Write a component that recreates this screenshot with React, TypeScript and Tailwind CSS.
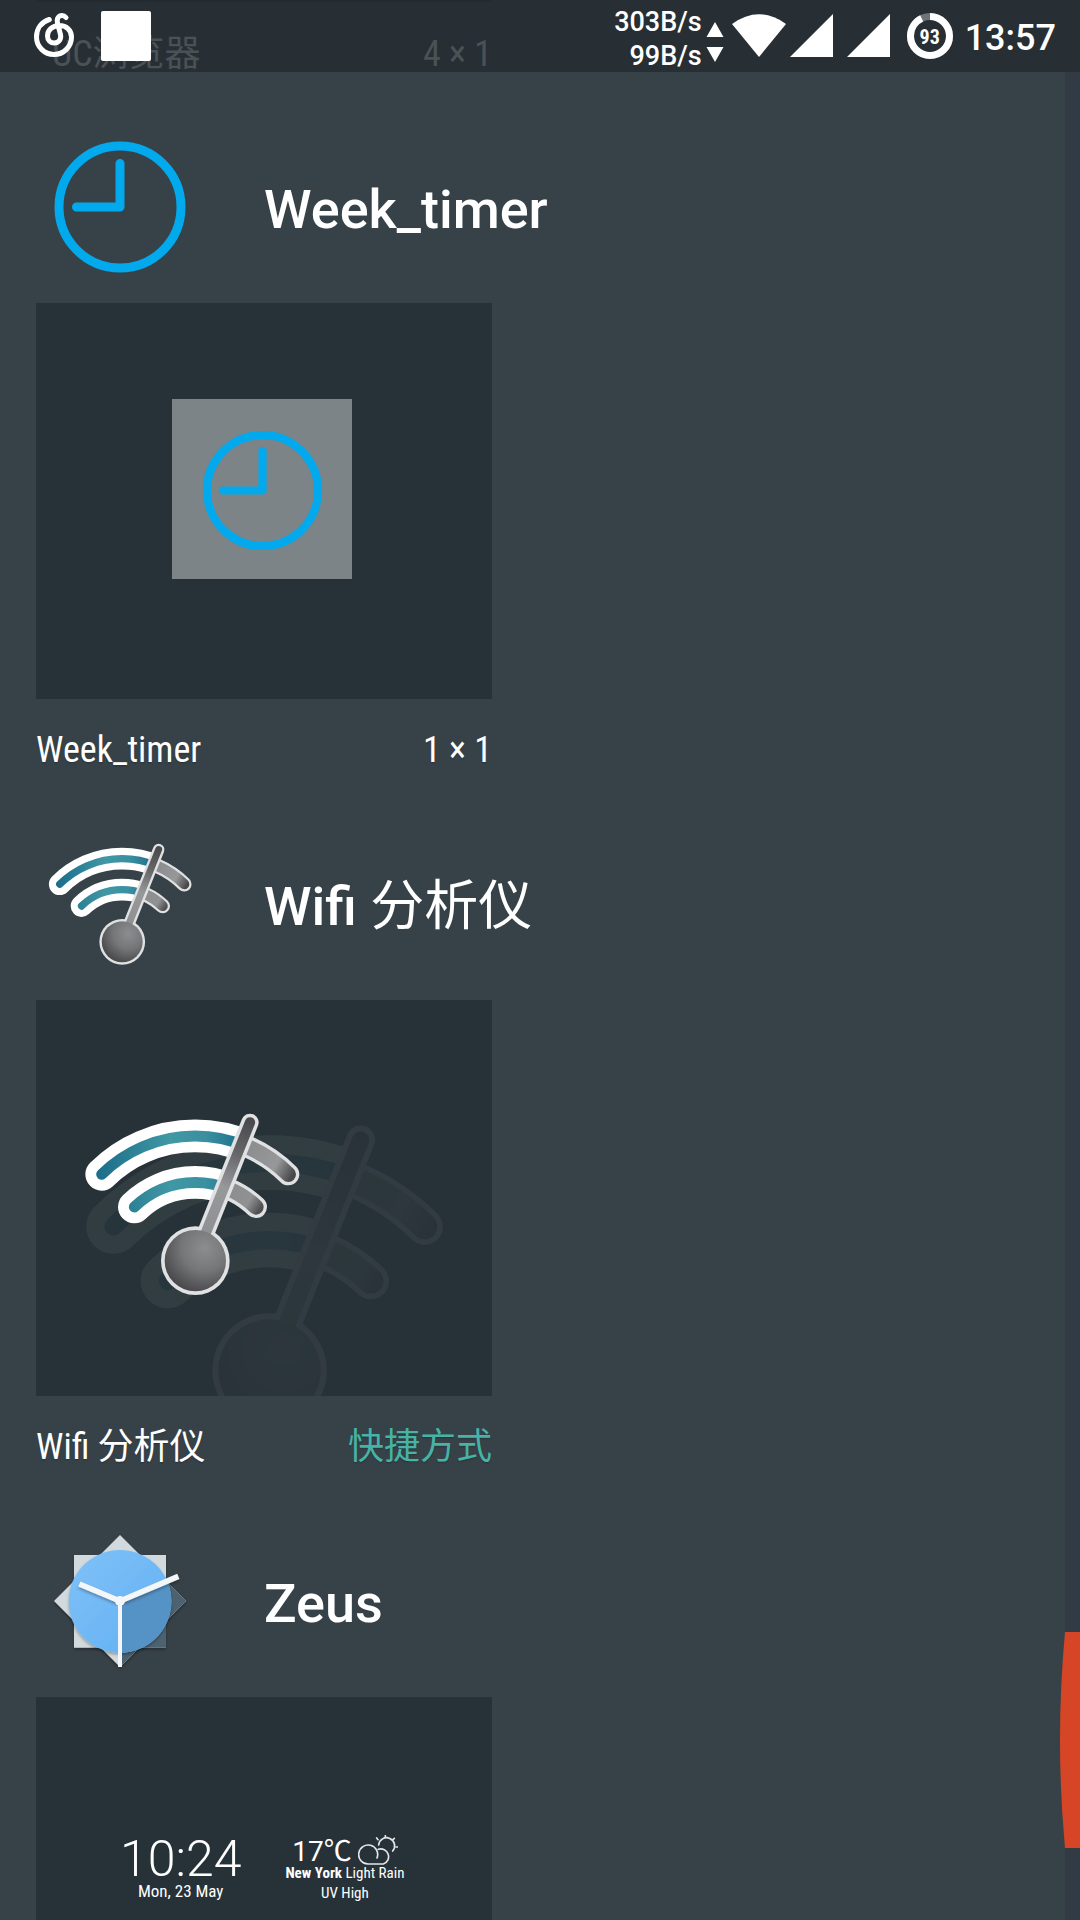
import { useId, type ReactNode } from "react";

function ClockIcon({ className }: { className: string }) {
  return (
    <svg viewBox="0 0 144 144" className={className} fill="none" stroke="#02a9ed" strokeWidth="9" aria-hidden="true">
      <circle cx="72" cy="72" r="61" />
      <path d="M72 28.5V72H28.5" strokeLinecap="round" strokeLinejoin="round" />
    </svg>
  );
}

function WifiMeterIcon({ className }: { className: string }) {
  const id = useId();
  const outer = "M53 235A398 398 0 0 1 613 235";
  const inner = "M151 333A263 263 0 0 1 516 333";
  return (
    <svg viewBox="0 0 648 648" className={className} fill="none" strokeLinecap="round" aria-hidden="true">
      <defs>
        <clipPath id={id + "l"}>
          <path d="M0 0H530L498 79L368 404L300 648H0Z" />
        </clipPath>
        <clipPath id={id + "r"}>
          <path d="M530 0L498 79L368 404V648H648V0Z" />
        </clipPath>
        <linearGradient id={id + "t"} gradientUnits="userSpaceOnUse" x1="50" y1="0" x2="470" y2="0">
          <stop offset="0" stopColor="#1d6f8b" />
          <stop offset=".5" stopColor="#4198a4" />
          <stop offset=".75" stopColor="#3a8fa0" />
          <stop offset="1" stopColor="#1f718d" />
        </linearGradient>
        <linearGradient id={id + "g"} gradientUnits="userSpaceOnUse" x1="490" y1="180" x2="620" y2="250">
          <stop offset="0" stopColor="#8d8e90" />
          <stop offset=".6" stopColor="#97989a" />
          <stop offset="1" stopColor="#48484a" />
        </linearGradient>
        <linearGradient id={id + "h"} gradientUnits="userSpaceOnUse" x1="440" y1="290" x2="525" y2="345">
          <stop offset="0" stopColor="#8d8e90" />
          <stop offset=".6" stopColor="#909193" />
          <stop offset="1" stopColor="#505052" />
        </linearGradient>
        <linearGradient id={id + "s"} gradientUnits="userSpaceOnUse" x1="498" y1="79" x2="368" y2="404">
          <stop offset="0" stopColor="#4b4b4d" />
          <stop offset=".3" stopColor="#68686a" />
          <stop offset=".6" stopColor="#97989a" />
          <stop offset="1" stopColor="#909193" />
        </linearGradient>
        <radialGradient id={id + "b"} cx=".65" cy=".3" r=".75">
          <stop offset="0" stopColor="#8c8d8f" />
          <stop offset=".5" stopColor="#757678" />
          <stop offset="1" stopColor="#47474a" />
        </radialGradient>
      </defs>
      <g clipPath={`url(#${id}r)`}>
        <path d={outer} stroke="#e0e1e2" strokeWidth="66" />
        <path d={inner} stroke="#e0e1e2" strokeWidth="66" />
        <path d={outer} stroke={`url(#${id}g)`} strokeWidth="46" />
        <path d={inner} stroke={`url(#${id}h)`} strokeWidth="46" />
      </g>
      <g clipPath={`url(#${id}l)`}>
        <path d={outer} stroke="#fff" strokeWidth="98" />
        <path d={inner} stroke="#fff" strokeWidth="98" />
        <path d={outer} stroke={`url(#${id}t)`} strokeWidth="33" />
        <path d={inner} stroke={`url(#${id}t)`} strokeWidth="33" />
      </g>
      <path d="M498 79L368 404" stroke="#e0e1e2" strokeWidth="52" />
      <circle cx="334" cy="494" r="103" fill="#e0e1e2" />
      <path d="M498 79L364 414" stroke={`url(#${id}s)`} strokeWidth="31" />
      <circle cx="334" cy="494" r="92" fill={`url(#${id}b)`} />
    </svg>
  );
}

function ZeusIcon({ className }: { className: string }) {
  const id = useId();
  return (
    <svg viewBox="0 0 432 432" className={className} aria-hidden="true">
      <defs>
        <clipPath id={id + "q"}>
          <path d="M216 216L432 124V432H216Z" />
        </clipPath>
        <linearGradient id={id + "c"} x1="0" y1="0" x2="1" y2="1">
          <stop offset="0" stopColor="#80c1f8" />
          <stop offset="1" stopColor="#60b0f2" />
        </linearGradient>
        <filter id={id + "f"} x="-20%" y="-20%" width="140%" height="140%">
          <feDropShadow dx="0" dy="6" stdDeviation="5" floodColor="#000" floodOpacity=".3" />
        </filter>
      </defs>
      <g filter={`url(#${id}f)`}>
        <path d="M216 18L414 216L216 414L18 216Z" fill="#d3dadd" />
        <path d="M78 78H354V356H78Z" fill="#d3dadd" />
        <g clipPath={`url(#${id}q)`} fill="#4d626f">
          <path d="M216 18L414 216L216 414L18 216Z" />
          <path d="M78 140H354V356H78Z" />
        </g>
      </g>
      <circle cx="216" cy="217" r="154" fill={`url(#${id}c)`} filter={`url(#${id}f)`} />
      <circle cx="216" cy="217" r="154" fill="#5592c6" clipPath={`url(#${id}q)`} />
      <path d="M94 165L216 216L391 142" fill="none" stroke="#f5f6f7" strokeWidth="17" filter={`url(#${id}f)`} />
      <path d="M216 216V414" stroke="#f5f6f7" strokeWidth="12" />
      <circle cx="216" cy="216" r="15" fill="#f5f6f7" />
    </svg>
  );
}

function CloudSunIcon() {
  return (
    <svg viewBox="0 0 120 90" className="h-[30px] w-10 shrink-0" fill="none" stroke="#e4e6e7" strokeWidth="5" strokeLinecap="round" aria-hidden="true">
      <path d="M30 87A28.500 28.500 0 1 1 57 69M30 87H76A23 23 0 1 0 61 43" />
      <path d="M62 30A24 24 0 1 1 104 48" />
      <path d="M82 2V6M56 9L60 14M109 10L105 14M114 36H119" />
    </svg>
  );
}

function StatusBar() {
  return (
    <header className="relative flex h-[72px] shrink-0 items-center justify-between bg-[#272f35] pl-[34px] pr-6 font-medium text-white">
      <div className="absolute left-9 top-0 w-[456px] border-t-2 border-[#232b30] font-['Roboto_Condensed','Roboto','Noto_Sans_CJK_SC',sans-serif] text-4xl font-normal text-[#4b5256]">
        <div className="flex justify-between pl-4 pt-8">
          <span>UC浏览器</span>
          <span>4 × 1</span>
        </div>
      </div>
      <div className="relative flex items-center gap-[27px]">
        <svg viewBox="0 0 40 46" className="h-[46px] w-10" fill="none" stroke="#fff" strokeWidth="5" strokeLinecap="round" aria-hidden="true">
          <path d="M15.300 6.500C7.500 9 2.500 15.500 2.500 24A17.500 17.500 0 0 0 37.500 24C37.500 17 32 12.500 25.500 12.500C18 12.500 13.500 17.500 13.500 23C13.500 27.500 16.500 30 20.500 30C25 30 27.500 26 26.500 21.500L23.500 10C22.300 5 25 2.500 28 2.500C30 2.500 31 3.300 32 4.500" />
        </svg>
        <div className="size-[50px] rounded-xs bg-white" />
      </div>
      <div className="relative flex items-center">
        <div className="pt-1.5 text-right text-[27px] leading-[34px]">
          <div>303B/s</div>
          <div>99B/s</div>
        </div>
        <svg viewBox="0 0 18 40" className="ml-1 mt-3 h-10 w-[18px]" fill="#fff" aria-hidden="true">
          <path d="M9 0L17.500 15H.5ZM.5 25H17.500L9 40Z" />
        </svg>
        <svg viewBox="0 0 54 44" className="ml-2 h-11 w-[54px]" fill="#fff" aria-hidden="true">
          <path d="M0 10Q27 -9.500 54 10L27 43Z" />
        </svg>
        <svg viewBox="0 0 44 44" className="ml-1 size-11" fill="#fff" aria-hidden="true">
          <path d="M43 0V43H0Z" />
        </svg>
        <svg viewBox="0 0 44 44" className="ml-[13px] size-11" fill="#fff" aria-hidden="true">
          <path d="M43 0V43H0Z" />
        </svg>
        <div className="relative ml-4 flex size-[46px] items-center justify-center">
          <svg viewBox="0 0 46 46" className="absolute inset-0" fill="none" strokeWidth="7" aria-hidden="true">
            <circle cx="23" cy="23" r="19.5" stroke="#6d7376" />
            <circle cx="23" cy="23" r="19.5" stroke="#fff" pathLength="100" strokeDasharray="93 7" transform="rotate(-90 23 23)" />
          </svg>
          <span className="pt-0.5 font-['Roboto_Condensed','Roboto',sans-serif] text-xl font-bold">93</span>
        </div>
        <time className="ml-3 pt-1 text-4xl">13:57</time>
      </div>
    </header>
  );
}

function AppSection({ icon, title, children, footer }: { icon: ReactNode; title: ReactNode; children: ReactNode; footer?: ReactNode }) {
  return (
    <section>
      <div className="flex h-48 items-center gap-[72px] pl-12">
        {icon}
        <h2 className="pt-1.5 text-[54px] font-medium leading-16">{title}</h2>
      </div>
      <button type="button" className="relative ml-9 flex h-[396px] w-[456px] items-start overflow-hidden bg-[#273238] pt-24 text-left">
        {children}
      </button>
      <div className="ml-9 flex h-[109px] w-[456px] items-center justify-between pb-2 font-['Roboto_Condensed','Roboto','Noto_Sans_CJK_SC',sans-serif] text-4xl text-shadow-sm">
        {footer}
      </div>
    </section>
  );
}

export default function App() {
  return (
    <div className="flex h-screen flex-col overflow-hidden bg-[#374248] font-['Roboto','Noto_Sans_CJK_SC',sans-serif] text-white">
      <StatusBar />
      <div className="flex min-h-0 flex-1">
        <main className="min-w-0 flex-1 overflow-hidden pt-[39px]">
          <AppSection
            icon={<ClockIcon className="size-36" />}
            title="Week_timer"
            footer={
              <>
                <span>Week_timer</span>
                <span>1 × 1</span>
              </>
            }
          >
            <div className="ml-[136px] flex size-[180px] items-center justify-center bg-[#7c8487] pt-0.5">
              <ClockIcon className="size-[131px]" />
            </div>
          </AppSection>
          <AppSection
            icon={<WifiMeterIcon className="size-36" />}
            title={
              <>
                Wifi <span className="font-normal">分析仪</span>
              </>
            }
            footer={
              <>
                <span>Wifi 分析仪</span>
                <span className="text-[#46b3a6]">快捷方式</span>
              </>
            }
          >
            <div className="relative ml-12">
              <WifiMeterIcon className="size-[360px] opacity-5" />
              <WifiMeterIcon className="absolute left-0 top-0 size-[216px]" />
            </div>
          </AppSection>
          <AppSection icon={<ZeusIcon className="size-36" />} title="Zeus">
            <div className="flex items-start gap-11 pl-[84px] pt-11 font-['Roboto_Condensed','Roboto','Noto_Sans_CJK_SC',sans-serif]">
              <div className="text-center">
                <div className="font-['Roboto',sans-serif] text-[50px] font-light leading-11">10:24</div>
                <div className="text-[17px] leading-5">Mon, 23 May</div>
              </div>
              <div className="text-center text-[15px] leading-5">
                <div className="flex h-[26px] items-center justify-center gap-1.5 font-['Roboto','Noto_Sans_CJK_SC',sans-serif] text-[28px]">
                  <span className="pt-1">17℃</span>
                  <CloudSunIcon />
                </div>
                <div>
                  <strong>New York</strong> Light Rain
                </div>
                <div>UV High</div>
              </div>
            </div>
          </AppSection>
        </main>
        <div className="relative w-[15px] shrink-0 bg-[#323a43]">
          <svg viewBox="0 0 20 216" className="absolute bottom-[72px] right-0 h-[216px] w-5" fill="#d64626" aria-hidden="true">
            <path d="M20 0H5Q-5 108 5 216H20Z" />
          </svg>
        </div>
      </div>
    </div>
  );
}
